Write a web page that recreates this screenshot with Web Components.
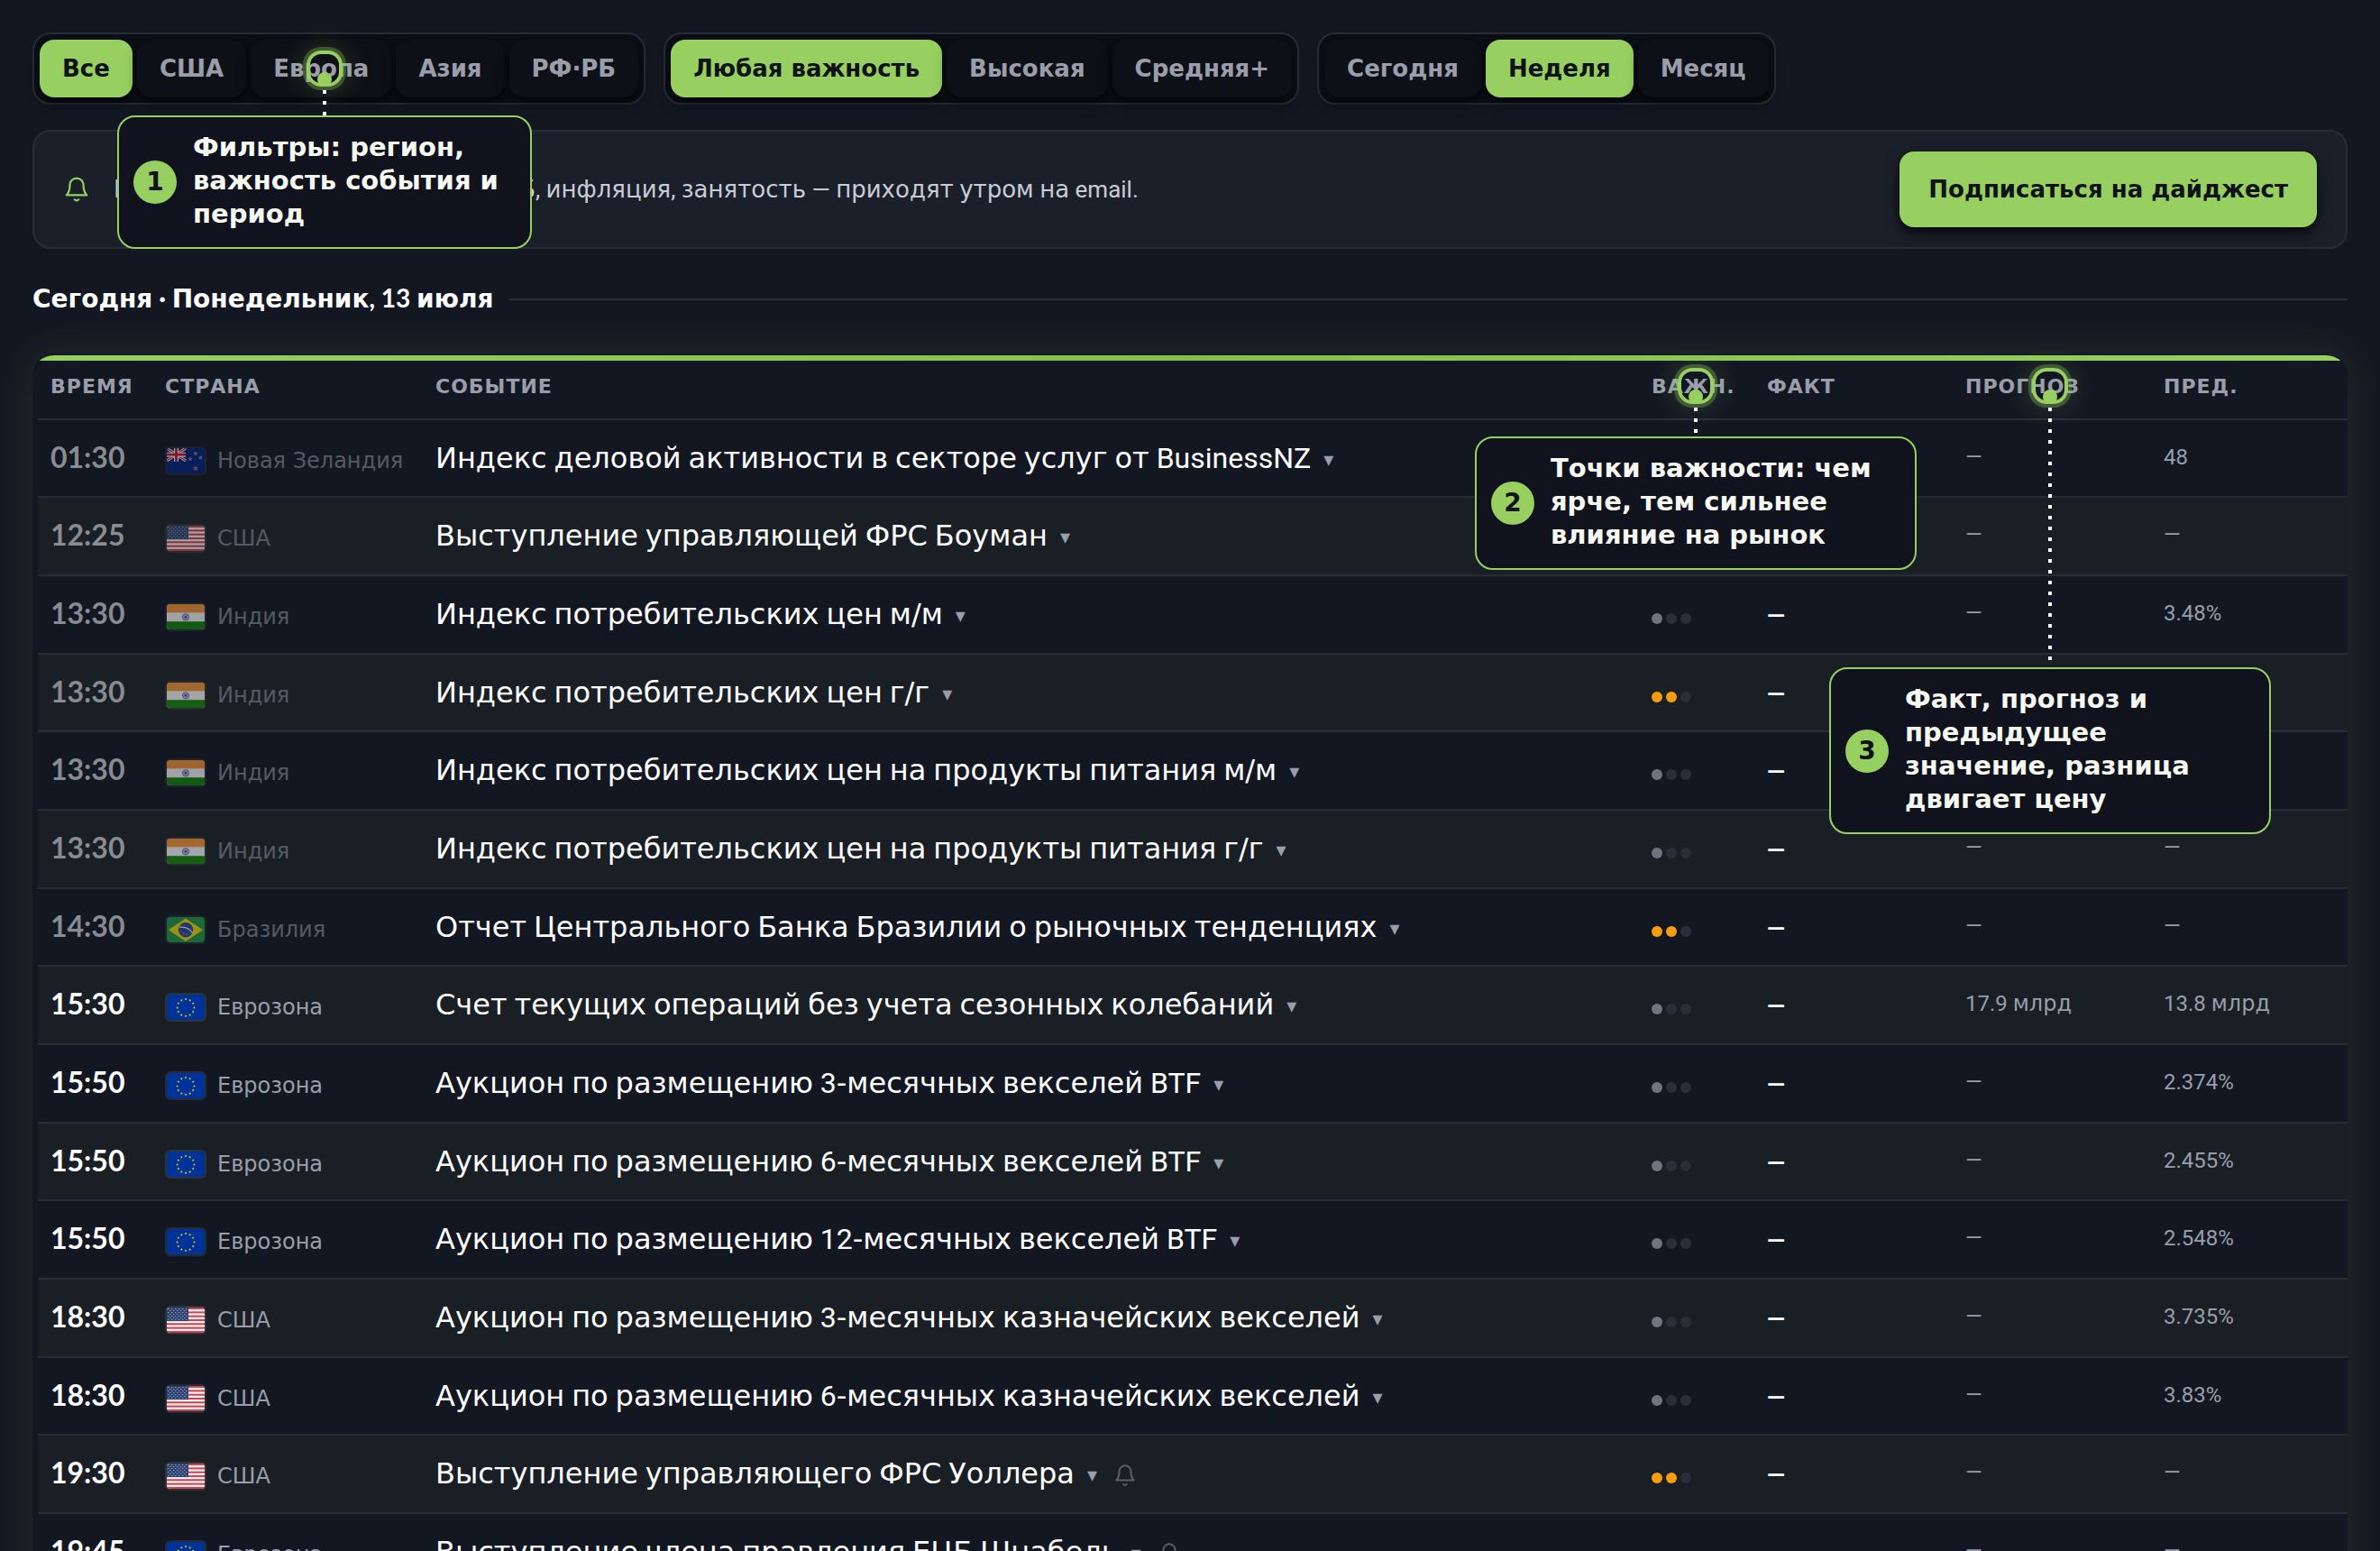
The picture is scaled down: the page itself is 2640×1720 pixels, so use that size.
<!DOCTYPE html>
<html lang="ru">
<head>
<meta charset="utf-8">
<meta name="viewport" content="width=device-width, initial-scale=1">
<title>Экономический календарь</title>
<style>
  :root {
    --bg: #131722;
    --surface: #1b1f29;
    --stripe: #1a1f25;
    --line: #282c36;
    --green: #97d060;
    --ink: #0f1319;
    --muted: #9a9eab;
    --font: "DejaVu Sans", sans-serif;
    --latin: Roboto, sans-serif;
  }

  body {
    margin: 0;
    background: var(--bg);
    color: #fff;
    font-family: var(--font);
  }
</style>
</head>
<body>
<calendar-page></calendar-page>

<script>
// Latin letters, digits and spaces use a narrower face than the Cyrillic ones.
const mixed = (text) => text.replace(/[A-Za-z0-9 ,.:·%—]+/g, (run) => `<span class="latin">${run}</span>`);

// Zero line height: the second face must not stretch the line box.
const MIXED_STYLE = '.latin { font-family: var(--latin); line-height: 0; white-space: pre-wrap; }';

const attach = (host, html) => {
  host.attachShadow({mode: 'open'}).innerHTML = html;
};

class BellIcon extends HTMLElement {
  connectedCallback() {
    attach(this, `
      <style>
        :host { display: inline-block; width: 30px; height: 30px; }
        svg { display: block; width: 100%; height: 100%; }
      </style>
      <svg viewBox="0 0 24 24" fill="none" stroke="currentColor" stroke-width="1.8" stroke-linecap="round" stroke-linejoin="round" aria-hidden="true">
        <path d="M18 8a6 6 0 0 0-12 0c0 7-3 9-3 9h18s-3-2-3-9"/>
        <path d="M13.73 21a2 2 0 0 1-3.46 0"/>
      </svg>
    `);
  }
}
customElements.define('bell-icon', BellIcon);

const star = (cx, cy, r, fill) => {
  const points = [];
  for (let i = 0; i < 10; i++) {
    const a = Math.PI * i / 5 - Math.PI / 2;
    const d = i % 2 ? r * 0.4 : r;
    points.push(`${(cx + d * Math.cos(a)).toFixed(2)},${(cy + d * Math.sin(a)).toFixed(2)}`);
  }
  return `<polygon points="${points.join(' ')}" fill="${fill}"/>`;
};

const usFlag = () => {
  let out = '<rect width="42" height="28" fill="#fff"/>';
  for (let i = 0; i < 7; i++) {
    out += `<rect y="${(i * 56 / 13).toFixed(2)}" width="42" height="2.15" fill="#d0434f"/>`;
  }
  out += '<rect width="24" height="15.1" fill="#2f4373"/>';
  for (let row = 0; row < 7; row++) {
    for (let col = 0; col < 6; col++) {
      const x = 1.8 + col * 4 + (row % 2 ? 2 : 0);
      if (x < 23) {
        out += `<circle cx="${x}" cy="${1.5 + row * 2}" r="0.6" fill="#c6cde0"/>`;
      }
    }
  }
  return out;
};

const euFlag = () => {
  let out = '<rect width="42" height="28" fill="#039"/>';
  for (let i = 0; i < 12; i++) {
    const a = Math.PI * i / 6;
    out += star(21 + 9.4 * Math.sin(a), 14.4 - 9.4 * Math.cos(a), 1.6, '#fc0');
  }
  return out;
};

const FLAGS = {
  nz: `
    <rect width="42" height="28" fill="#00247d"/>
    <path d="M0 0 21 14M21 0 0 14" stroke="#fff" stroke-width="3"/>
    <path d="M0 0 21 14M21 0 0 14" stroke="#cc142b" stroke-width="1.2"/>
    <path d="M10.5 0v15M0 7.2h21" stroke="#fff" stroke-width="5"/>
    <path d="M10.5 0v15M0 7.2h21" stroke="#cc142b" stroke-width="2.8"/>
    <rect y="15" width="22" height="5" fill="#00247d"/>
    ${star(32, 6, 2.4, '#fff')}${star(26, 12, 2.4, '#fff')}${star(37.5, 10.5, 2.2, '#fff')}${star(32, 22.5, 2.8, '#fff')}
    ${star(32, 6, 1.7, '#cc142b')}${star(26, 12, 1.7, '#cc142b')}${star(37.5, 10.5, 1.5, '#cc142b')}${star(32, 22.5, 2, '#cc142b')}`,
  us: usFlag(),
  in: `
    <rect width="42" height="28" fill="#fff"/>
    <rect width="42" height="9.3" fill="#f93"/>
    <rect y="19.2" width="42" height="8.8" fill="#128807"/>
    <circle cx="21" cy="14.3" r="3.6" fill="#dcdcf4" stroke="#6a6ab8" stroke-width="1"/>
    <path d="M21 11v6.6M17.7 14.3h6.6M18.7 12l4.6 4.6M23.3 12l-4.6 4.6" stroke="#6a6ab8" stroke-width=".5"/>
    <circle cx="21" cy="14.3" r="1.3" fill="#44449c"/>`,
  br: `
    <rect width="42" height="28" fill="#229e45"/>
    <path d="M21 1.6 40.2 14.3 21 27 1.8 14.3z" fill="#f8e509"/>
    <circle cx="21" cy="14.3" r="8.2" fill="#2b49a3"/>
    <path d="M14 11.4c6-1 11.5 1.5 14.6 6.2" fill="none" stroke="#ffffef" stroke-width="1.3"/>
    <g fill="#ffffef"><circle cx="16" cy="16" r=".5"/><circle cx="19" cy="18" r=".5"/><circle cx="22" cy="19.5" r=".5"/><circle cx="18" cy="20" r=".4"/><circle cx="24" cy="17.5" r=".4"/></g>`,
  eu: euFlag(),
};

class CountryFlag extends HTMLElement {
  connectedCallback() {
    attach(this, `
      <style>
        :host {
          display: inline-block;
          width: 42px;
          height: 28px;
          border-radius: 4px;
          overflow: hidden;
          box-shadow: 0 0 0 2px rgba(255, 255, 255, .09);
        }
        svg { display: block; width: 100%; height: 100%; }
      </style>
      <svg viewBox="0 0 42 28" preserveAspectRatio="none" aria-hidden="true">${FLAGS[this.getAttribute('code')]}</svg>
    `);
  }
}
customElements.define('country-flag', CountryFlag);

class ImpactDots extends HTMLElement {
  connectedCallback() {
    const level = Number(this.getAttribute('level'));
    const dots = [1, 2, 3].map((n) => `<i class="${n <= level ? 'on' : ''}"></i>`).join('');
    attach(this, `
      <style>
        :host { display: inline-flex; gap: 4px; --on: #6f7480; }
        :host([level="2"]) { --on: #f79c0c; }
        :host([level="3"]) { --on: #ef4444; }
        i { width: 12px; height: 12px; border-radius: 50%; background: #2a2e39; }
        .on { background: var(--on); }
      </style>
      ${dots}
    `);
  }
}
customElements.define('impact-dots', ImpactDots);

class FilterGroup extends HTMLElement {
  connectedCallback() {
    attach(this, `
      <style>
        :host {
          display: inline-flex;
          gap: 5px;
          padding: 6px;
          border: 2px solid var(--line);
          border-radius: 20px;
          background: #0c0f16;
        }
      </style>
      <slot></slot>
    `);
    this.setAttribute('role', 'group');
  }
}
customElements.define('filter-group', FilterGroup);

class FilterOption extends HTMLElement {
  connectedCallback() {
    attach(this, `
      <style>
        :host { display: block; }
        button {
          display: block;
          height: 64px;
          padding: 0 25px;
          border: 0;
          border-radius: 16px;
          background: #0d1017;
          color: var(--muted);
          font: 700 26px/32px var(--font);
          white-space: nowrap;
          box-shadow: 0 6px 8px -2px rgba(0, 0, 0, .5), 0 8px 16px rgba(0, 0, 0, .25);
          cursor: pointer;
        }
        :host([selected]) button { background: var(--green); color: var(--ink); }
      </style>
      <button type="button" aria-pressed="${this.hasAttribute('selected')}"><slot></slot></button>
    `);
  }
}
customElements.define('filter-option', FilterOption);

class DigestBanner extends HTMLElement {
  connectedCallback() {
    attach(this, `
      <style>
        :host {
          display: flex;
          align-items: center;
          gap: 26px;
          padding: 22px 32px;
          border: 2px solid var(--line);
          border-radius: 20px;
          background: var(--surface);
        }
        bell-icon { flex: none; color: var(--green); }
        p { flex: 1; margin: 0; color: #c9ccd8; font-size: 26px; line-height: 36px; }
        button {
          height: 84px;
          padding: 0 32px;
          border: 0;
          border-radius: 16px;
          background: var(--green);
          color: var(--ink);
          font: 700 26px/32px var(--font);
          box-shadow: 0 8px 16px rgba(0, 0, 0, .5), 0 4px 6px rgba(0, 0, 0, .4);
          cursor: pointer;
        }
        ${MIXED_STYLE}
      </style>
      <bell-icon></bell-icon>
      <p>${mixed(this.getAttribute('text'))}</p>
      <button type="button"><slot></slot></button>
    `);
  }
}
customElements.define('digest-banner', DigestBanner);

class DayHeading extends HTMLElement {
  connectedCallback() {
    attach(this, `
      <style>
        :host { display: flex; align-items: center; gap: 18px; --latin: Lato, sans-serif; }
        :host::after { content: ""; flex: 1; height: 2px; background: var(--line); }
        h2 { margin: 0; font-size: 28px; line-height: 36px; font-weight: 700; }
        ${MIXED_STYLE}
      </style>
      <h2>${mixed(this.getAttribute('text'))}</h2>
    `);
  }
}
customElements.define('day-heading', DayHeading);

const COLUMNS = ['Время', 'Страна', 'Событие', 'Важн.', 'Факт', 'Прогноз', 'Пред.'];

const COUNTRIES = {
  nz: 'Новая Зеландия',
  us: 'США',
  in: 'Индия',
  br: 'Бразилия',
  eu: 'Еврозона',
};

const EVENTS = [
  {time: '01:30', country: 'nz', title: 'Индекс деловой активности в секторе услуг от BusinessNZ', impact: 1, previous: '48', past: true},
  {time: '12:25', country: 'us', title: 'Выступление управляющей ФРС Боуман', impact: 2, past: true},
  {time: '13:30', country: 'in', title: 'Индекс потребительских цен м/м', impact: 1, previous: '3.48%', past: true},
  {time: '13:30', country: 'in', title: 'Индекс потребительских цен г/г', impact: 2, past: true},
  {time: '13:30', country: 'in', title: 'Индекс потребительских цен на продукты питания м/м', impact: 1, past: true},
  {time: '13:30', country: 'in', title: 'Индекс потребительских цен на продукты питания г/г', impact: 1, past: true},
  {time: '14:30', country: 'br', title: 'Отчет Центрального Банка Бразилии о рыночных тенденциях', impact: 2, past: true},
  {time: '15:30', country: 'eu', title: 'Счет текущих операций без учета сезонных колебаний', impact: 1, forecast: '17.9 млрд', previous: '13.8 млрд'},
  {time: '15:50', country: 'eu', title: 'Аукцион по размещению 3-месячных векселей BTF', impact: 1, previous: '2.374%'},
  {time: '15:50', country: 'eu', title: 'Аукцион по размещению 6-месячных векселей BTF', impact: 1, previous: '2.455%'},
  {time: '15:50', country: 'eu', title: 'Аукцион по размещению 12-месячных векселей BTF', impact: 1, previous: '2.548%'},
  {time: '18:30', country: 'us', title: 'Аукцион по размещению 3-месячных казначейских векселей', impact: 1, previous: '3.735%'},
  {time: '18:30', country: 'us', title: 'Аукцион по размещению 6-месячных казначейских векселей', impact: 1, previous: '3.83%'},
  {time: '19:30', country: 'us', title: 'Выступление управляющего ФРС Уоллера', impact: 2, alarm: true},
  {time: '19:45', country: 'eu', title: 'Выступление члена правления ЕЦБ Шнабель', impact: 2, alarm: true},
];

class EventTable extends HTMLElement {
  #renderRow({time, country, title, impact, fact = '—', forecast = '—', previous = '—', past, alarm}) {
    return `
      <tr class="${past ? 'past' : ''}">
        <td class="time">${time}</td>
        <td class="country"><country-flag code="${country}"></country-flag><span>${COUNTRIES[country]}</span></td>
        <td class="title">${mixed(title)}<span class="caret">▾</span>${alarm ? '<bell-icon></bell-icon>' : ''}</td>
        <td><impact-dots level="${impact}"></impact-dots></td>
        <td class="fact">${mixed(fact)}</td>
        <td class="value">${mixed(forecast)}</td>
        <td class="value">${mixed(previous)}</td>
      </tr>`;
  }

  connectedCallback() {
    attach(this, `
      <style>
        :host {
          display: block;
          overflow: hidden;
          border-top: 2px solid var(--bg);
          border-radius: 24px 24px 0 0;
          background: var(--bg);
          box-shadow: 0 0 48px rgba(151, 209, 95, .13);
        }
        .accent { height: 6px; background: linear-gradient(90deg, var(--green), #86be4b 50%, var(--green)); }
        .scroller { padding-left: 6px; }
        table { width: 100%; border-collapse: separate; border-spacing: 0; table-layout: fixed; }
        .c-time { width: 121px; }
        .c-country { width: 300px; }
        .c-impact { width: 128px; }
        .c-number { width: 220px; }
        .c-last { width: 224px; }
        th {
          padding: 15px 0 21px 20px;
          border-bottom: 2px solid var(--line);
          color: var(--muted);
          font-size: 22px;
          line-height: 28px;
          letter-spacing: 1px;
          text-align: left;
          text-transform: uppercase;
        }
        td {
          height: 87px;
          box-sizing: border-box;
          padding: 23px 0 0 20px;
          border-bottom: 2px solid var(--line);
          vertical-align: baseline;
          font-size: 24px;
          line-height: 36px;
          white-space: nowrap;
        }
        tr:nth-child(3n + 1) td { height: 86px; }
        th:first-child, td:first-child { padding-left: 14px; }
        tbody tr:nth-child(even) { background: var(--stripe); }
        .time { font: 700 32px/36px Lato, sans-serif; }
        .country { color: var(--muted); }
        .country country-flag { margin: 0 14px 0 2px; vertical-align: -6px; }
        .title { font-size: 32px; }
        .caret { margin-left: 14px; color: var(--muted); font-size: 22px; line-height: 20px; vertical-align: 2px; }
        .title bell-icon { width: 26px; height: 26px; margin-left: 18px; color: #5b5f6b; vertical-align: -4px; }
        .fact { font-size: 26px; font-weight: 700; }
        .value { color: var(--muted); vertical-align: top; }
        .past .time { color: #898b91; }
        .past .country { color: #575a66; }
        .past country-flag { opacity: .6; }
        ${MIXED_STYLE}
      </style>
      <div class="accent"></div>
      <div class="scroller">
        <table>
          <colgroup>
            <col class="c-time"><col class="c-country"><col><col class="c-impact">
            <col class="c-number"><col class="c-number"><col class="c-last">
          </colgroup>
          <thead><tr>${COLUMNS.map((name) => `<th scope="col">${name}</th>`).join('')}</tr></thead>
          <tbody>${EVENTS.map((event) => this.#renderRow(event)).join('')}</tbody>
        </table>
      </div>
    `);
  }
}
customElements.define('event-table', EventTable);

// A numbered hint: a ring over its target, a dotted lead and the text card.
class TourHint extends HTMLElement {
  connectedCallback() {
    attach(this, `
      <style>
        :host {
          position: absolute;
          display: flex;
          flex-direction: column;
          align-items: center;
          width: var(--width, 490px);
        }
        .ring {
          box-sizing: border-box;
          display: flex;
          align-items: flex-end;
          justify-content: center;
          width: 40px;
          height: 40px;
          border: 4px solid var(--green);
          border-radius: 16px;
          box-shadow: 0 0 0 4px rgba(151, 209, 95, .3), 0 0 32px rgba(151, 209, 95, .3);
        }
        .ring::after {
          content: "";
          width: 16px;
          height: 16px;
          margin-bottom: -4px;
          border-radius: 50%;
          background: var(--green);
        }
        .lead {
          width: 4px;
          height: var(--lead, 28px);
          margin-top: 4px;
          background: repeating-linear-gradient(#fff 0 4px, transparent 4px 12px);
        }
        .card {
          box-sizing: border-box;
          display: flex;
          align-items: center;
          gap: 18px;
          width: 100%;
          padding: 15px 16px;
          border: 2px solid var(--green);
          border-radius: 20px;
          background: #10121d;
          color: #f6f8f2;
          font-size: 29px;
          line-height: 37px;
          font-weight: 700;
        }
        .text { padding-bottom: 3px; }
        .number {
          flex: none;
          width: 48px;
          border-radius: 50%;
          background: var(--green);
          color: var(--ink);
          font-size: 28px;
          line-height: 48px;
          text-align: center;
        }
      </style>
      <span class="ring"></span>
      <span class="lead"></span>
      <div class="card"><span class="number">${this.getAttribute('number')}</span><span class="text"><slot></slot></span></div>
    `);
  }
}
customElements.define('tour-hint', TourHint);

class CalendarPage extends HTMLElement {
  connectedCallback() {
    attach(this, `
      <style>
        :host { display: block; position: relative; padding: 36px 36px 0; }
        .filters { display: flex; flex-wrap: wrap; gap: 20px; margin-bottom: 28px; }
        day-heading { margin: 38px 0 42px; }
        .hint-filters { left: 130px; top: 56px; --width: 460px; }
        .hint-impact { right: 514px; top: 408px; --lead: 32px; }
        .hint-values { right: 121px; top: 408px; --lead: 288px; }
      </style>
      <div class="filters">
        <filter-group aria-label="Регион">
          <filter-option selected>Все</filter-option>
          <filter-option>США</filter-option>
          <filter-option>Европа</filter-option>
          <filter-option>Азия</filter-option>
          <filter-option>РФ·РБ</filter-option>
        </filter-group>
        <filter-group aria-label="Важность">
          <filter-option selected>Любая важность</filter-option>
          <filter-option>Высокая</filter-option>
          <filter-option>Средняя+</filter-option>
        </filter-group>
        <filter-group aria-label="Период">
          <filter-option>Сегодня</filter-option>
          <filter-option selected>Неделя</filter-option>
          <filter-option>Месяц</filter-option>
        </filter-group>
      </div>
      <digest-banner text="Важные события утра: ставки ЕЦБ, инфляция, занятость — приходят утром на email.">Подписаться на дайджест</digest-banner>
      <day-heading text="Сегодня · Понедельник, 13 июля"></day-heading>
      <event-table></event-table>
      <tour-hint class="hint-filters" number="1">Фильтры: регион, важность события и период</tour-hint>
      <tour-hint class="hint-impact" number="2">Точки важности: чем ярче, тем сильнее влияние на рынок</tour-hint>
      <tour-hint class="hint-values" number="3">Факт, прогноз и предыдущее значение, разница двигает цену</tour-hint>
    `);
  }
}
customElements.define('calendar-page', CalendarPage);
</script>
</body>
</html>
